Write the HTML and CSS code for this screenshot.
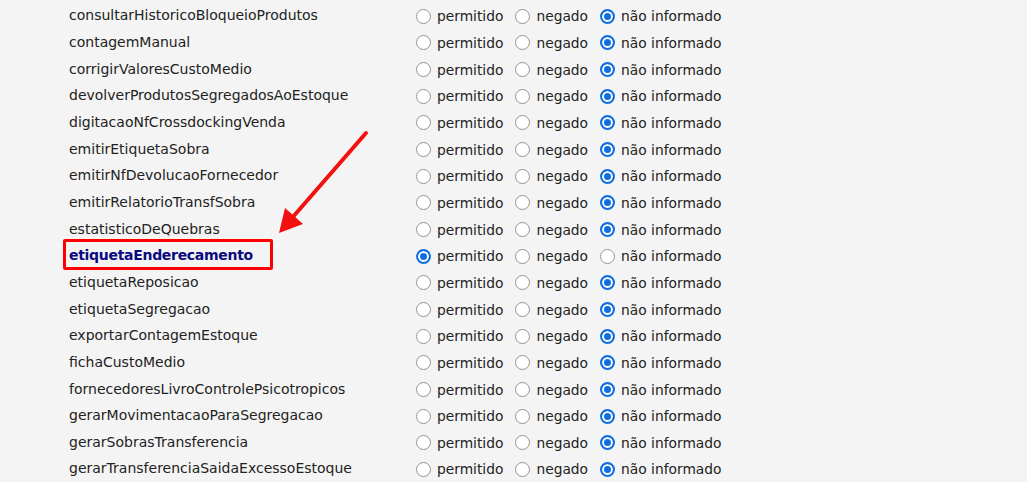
FILE: index.html
```html
<!DOCTYPE html>
<html>
<head>
<meta charset="utf-8">
<link rel="stylesheet" href="styles.css">
</head>
<body>
<div class="list">
  <div class="row"><div class="name"><span>consultarHistoricoBloqueioProdutos</span></div><div class="opts"><label><span class="radio"></span>permitido</label><label><span class="radio"></span>negado</label><label><span class="radio on"></span>não informado</label></div></div>
  <div class="row"><div class="name"><span>contagemManual</span></div><div class="opts"><label><span class="radio"></span>permitido</label><label><span class="radio"></span>negado</label><label><span class="radio on"></span>não informado</label></div></div>
  <div class="row"><div class="name"><span>corrigirValoresCustoMedio</span></div><div class="opts"><label><span class="radio"></span>permitido</label><label><span class="radio"></span>negado</label><label><span class="radio on"></span>não informado</label></div></div>
  <div class="row"><div class="name"><span>devolverProdutosSegregadosAoEstoque</span></div><div class="opts"><label><span class="radio"></span>permitido</label><label><span class="radio"></span>negado</label><label><span class="radio on"></span>não informado</label></div></div>
  <div class="row"><div class="name"><span>digitacaoNfCrossdockingVenda</span></div><div class="opts"><label><span class="radio"></span>permitido</label><label><span class="radio"></span>negado</label><label><span class="radio on"></span>não informado</label></div></div>
  <div class="row"><div class="name"><span>emitirEtiquetaSobra</span></div><div class="opts"><label><span class="radio"></span>permitido</label><label><span class="radio"></span>negado</label><label><span class="radio on"></span>não informado</label></div></div>
  <div class="row"><div class="name"><span>emitirNfDevolucaoFornecedor</span></div><div class="opts"><label><span class="radio"></span>permitido</label><label><span class="radio"></span>negado</label><label><span class="radio on"></span>não informado</label></div></div>
  <div class="row"><div class="name"><span>emitirRelatorioTransfSobra</span></div><div class="opts"><label><span class="radio"></span>permitido</label><label><span class="radio"></span>negado</label><label><span class="radio on"></span>não informado</label></div></div>
  <div class="row"><div class="name"><span>estatisticoDeQuebras</span></div><div class="opts"><label><span class="radio"></span>permitido</label><label><span class="radio"></span>negado</label><label><span class="radio on"></span>não informado</label></div></div>
  <div class="row"><div class="name"><span class="highlight">etiquetaEnderecamento</span></div><div class="opts"><label><span class="radio on"></span>permitido</label><label><span class="radio"></span>negado</label><label><span class="radio"></span>não informado</label></div></div>
  <div class="row"><div class="name"><span>etiquetaReposicao</span></div><div class="opts"><label><span class="radio"></span>permitido</label><label><span class="radio"></span>negado</label><label><span class="radio on"></span>não informado</label></div></div>
  <div class="row"><div class="name"><span>etiquetaSegregacao</span></div><div class="opts"><label><span class="radio"></span>permitido</label><label><span class="radio"></span>negado</label><label><span class="radio on"></span>não informado</label></div></div>
  <div class="row"><div class="name"><span>exportarContagemEstoque</span></div><div class="opts"><label><span class="radio"></span>permitido</label><label><span class="radio"></span>negado</label><label><span class="radio on"></span>não informado</label></div></div>
  <div class="row"><div class="name"><span>fichaCustoMedio</span></div><div class="opts"><label><span class="radio"></span>permitido</label><label><span class="radio"></span>negado</label><label><span class="radio on"></span>não informado</label></div></div>
  <div class="row"><div class="name"><span>fornecedoresLivroControlePsicotropicos</span></div><div class="opts"><label><span class="radio"></span>permitido</label><label><span class="radio"></span>negado</label><label><span class="radio on"></span>não informado</label></div></div>
  <div class="row"><div class="name"><span>gerarMovimentacaoParaSegregacao</span></div><div class="opts"><label><span class="radio"></span>permitido</label><label><span class="radio"></span>negado</label><label><span class="radio on"></span>não informado</label></div></div>
  <div class="row"><div class="name"><span>gerarSobrasTransferencia</span></div><div class="opts"><label><span class="radio"></span>permitido</label><label><span class="radio"></span>negado</label><label><span class="radio on"></span>não informado</label></div></div>
  <div class="row"><div class="name"><span>gerarTransferenciaSaidaExcessoEstoque</span></div><div class="opts"><label><span class="radio"></span>permitido</label><label><span class="radio"></span>negado</label><label><span class="radio on"></span>não informado</label></div></div>
</div>
<svg class="arrow" width="120" height="120" viewBox="0 0 120 120">
  <line x1="106" y1="13" x2="32" y2="98" stroke="#f21010" stroke-width="4" stroke-linecap="round"/>
  <polygon points="19,113 25,88 43,104" fill="#f21010"/>
</svg>
</body>
</html>
```

FILE: styles.css
```css
html, body {
  margin: 0;
  padding: 0;
  background: #f4f4f4;
  height: 100%;
  overflow: hidden;
}
body {
  position: relative;
  font-family: "DejaVu Sans", Verdana, sans-serif;
  font-size: 14px;
  color: #222;
}
.list {
  padding-top: 3px;
}
.row {
  display: flex;
  align-items: center;
  height: 26.67px;
}
.name {
  width: 347px;
  padding-left: 69px;
  margin-top: -2px;
}
.highlight {
  font-weight: bold;
  color: #0a0a80;
  letter-spacing: -0.3px;
  position: relative;
}
.highlight::after {
  content: "";
  position: absolute;
  left: -6px;
  top: -8px;
  width: 204px;
  height: 25px;
  border: 3px solid #f00;
  border-radius: 2px;
}
.opts {
  display: flex;
  align-items: center;
  gap: 12px;
  font-size: 13.8px;
}
.opts label {
  display: flex;
  align-items: center;
}
.radio {
  width: 15px;
  height: 15px;
  box-sizing: border-box;
  border: 1.5px solid #939393;
  border-radius: 50%;
  background: #fff;
  margin-right: 6px;
}
.radio.on {
  border: 2px solid #0f6fe0;
  background: #0f6fe0;
  box-shadow: inset 0 0 0 2px #fff;
}
.arrow {
  position: absolute;
  left: 260px;
  top: 120px;
}
```
